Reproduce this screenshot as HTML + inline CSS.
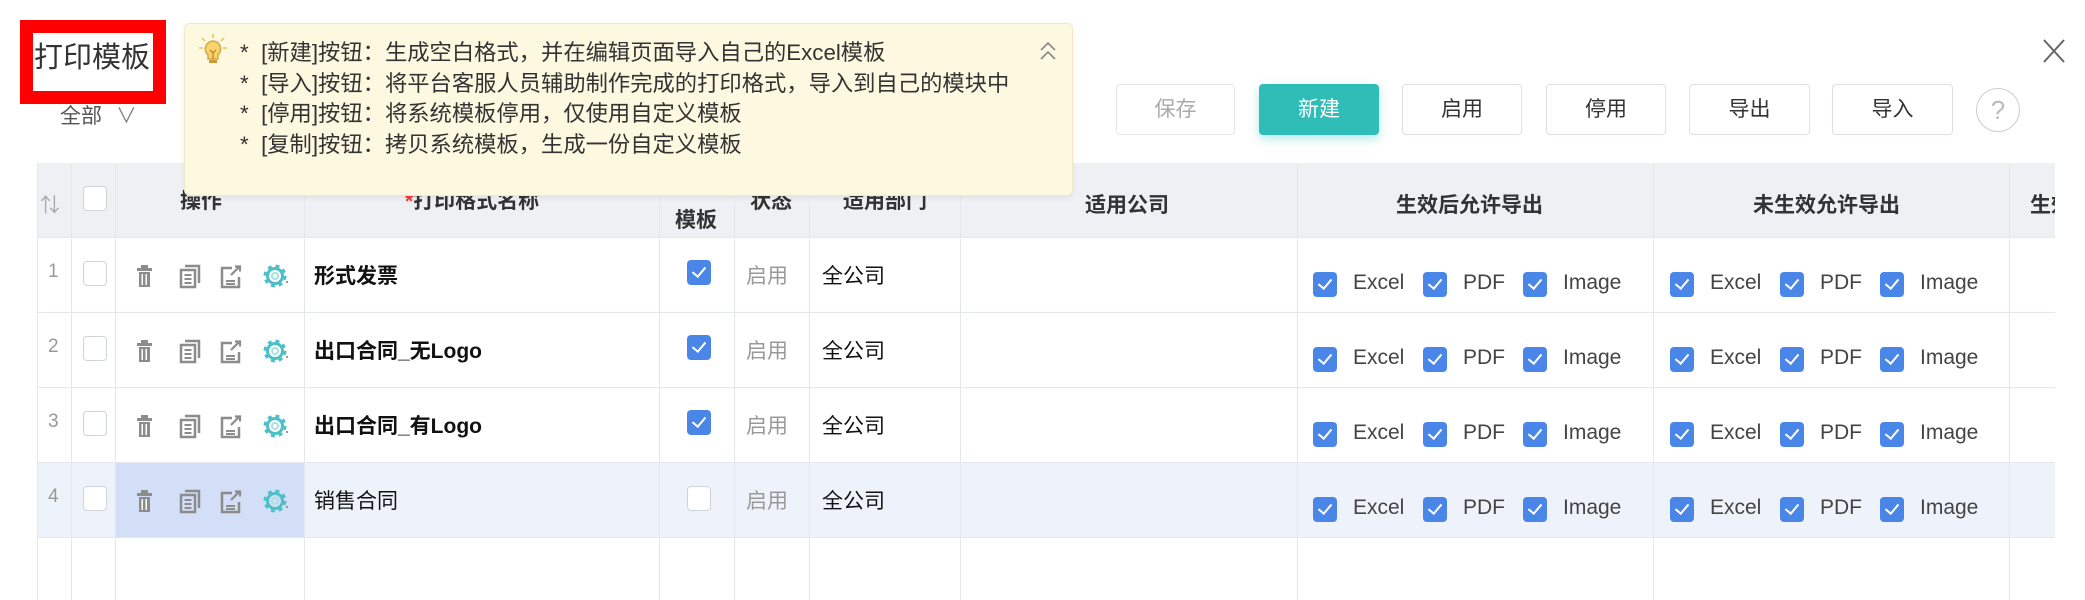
<!DOCTYPE html>
<html><head><meta charset="utf-8"><style>
*{margin:0;padding:0;box-sizing:border-box}
body{width:2085px;height:600px;background:#fff;position:relative;overflow:hidden;font-family:"Liberation Sans","Noto Sans CJK SC",sans-serif;color:#222}
.a{position:absolute;white-space:nowrap}
.btn{position:absolute;top:84px;height:51px;border:1px solid #dcdfe6;border-radius:4px;background:#fff;font-size:21px;color:#333;text-align:center;line-height:49px}
.vl{position:absolute;width:1px;background:#e4e7ed}
.hl{position:absolute;height:1px;background:#e4e7ed;left:37px;width:2018px}
.cb{position:absolute;width:24px;height:25px;border-radius:4px;background:#4a86e8}
.cb::after{content:"";position:absolute;left:8px;top:4px;width:6px;height:11px;border:solid #fff;border-width:0 2.5px 2.5px 0;transform:rotate(40deg)}
.ecb{position:absolute;width:24px;height:25px;border-radius:4px;border:1px solid #cfd3da;background:#fff}
.t{position:absolute;font-size:21px;white-space:nowrap}
</style></head><body>
<div class="a" style="left:20px;top:20px;width:146px;height:84px;border:13px solid #f00"></div>
<div class="a" style="left:34px;top:34px;font-size:29px;color:#333">打印模板</div>
<div class="a" style="left:60px;top:100px;font-size:21px;color:#555">全部 <span style="color:#888;margin-left:8px">∨</span></div>
<svg class="a" style="left:2042px;top:38px" width="24" height="26" viewBox="0 0 24 26"><path d="M2 2L22 24M22 2L2 24" stroke="#666" stroke-width="2" fill="none"/></svg>
<div class="btn" style="left:1116px;width:119px;color:#aaa;border-color:#e6e6e6">保存</div>
<div class="btn" style="left:1259px;width:120px;background:#2fbdb8;border-color:#2fbdb8;color:#fff;box-shadow:0 4px 10px rgba(47,189,184,.35)">新建</div>
<div class="btn" style="left:1402px;width:120px">启用</div>
<div class="btn" style="left:1546px;width:120px">停用</div>
<div class="btn" style="left:1689px;width:121px">导出</div>
<div class="btn" style="left:1832px;width:121px">导入</div>
<div class="a" style="left:1976px;top:88px;width:44px;height:44px;border:1px solid #ccc;border-radius:50%;text-align:center;line-height:42px;font-size:26px;color:#bbb">?</div>
<div class="a" style="left:37px;top:163px;width:2018px;height:74px;background:#eef0f4"></div>
<div class="a" style="left:37px;top:462px;width:2018px;height:75px;background:#eef3fb"></div>
<div class="a" style="left:116px;top:462px;width:189px;height:75px;background:#d3def7"></div>
<div class="vl" style="left:37px;top:163px;height:437px"></div>
<div class="vl" style="left:71px;top:163px;height:437px"></div>
<div class="vl" style="left:115px;top:163px;height:437px"></div>
<div class="vl" style="left:304px;top:163px;height:437px"></div>
<div class="vl" style="left:659px;top:163px;height:437px"></div>
<div class="vl" style="left:734px;top:163px;height:437px"></div>
<div class="vl" style="left:809px;top:163px;height:437px"></div>
<div class="vl" style="left:960px;top:163px;height:437px"></div>
<div class="vl" style="left:1297px;top:163px;height:437px"></div>
<div class="vl" style="left:1653px;top:163px;height:437px"></div>
<div class="vl" style="left:2009px;top:163px;height:437px"></div>
<div class="hl" style="top:237px"></div>
<div class="hl" style="top:312px"></div>
<div class="hl" style="top:387px"></div>
<div class="hl" style="top:462px"></div>
<div class="hl" style="top:537px"></div>
<div class="t" style="left:40px;top:189px;color:#aaa;font-size:20px">⇅</div>
<div class="ecb" style="left:83px;top:186px"></div>
<div class="t" style="left:180px;top:185px;font-weight:bold;color:#333">操作</div>
<div class="t" style="left:405px;top:185px;font-weight:bold;color:#333"><span style="color:#f33">*</span>打印格式名称</div>
<div class="t" style="left:675px;top:204px;font-weight:bold;color:#333">模板</div>
<div class="t" style="left:750px;top:185px;font-weight:bold;color:#333">状态</div>
<div class="t" style="left:843px;top:185px;font-weight:bold;color:#333">适用部门</div>
<div class="t" style="left:1085px;top:189px;font-weight:bold;color:#333">适用公司</div>
<div class="t" style="left:1396px;top:189px;font-weight:bold;color:#333">生效后允许导出</div>
<div class="t" style="left:1753px;top:189px;font-weight:bold;color:#333">未生效允许导出</div>
<div class="t" style="left:2030px;top:189px;font-weight:bold;color:#333">生效</div>
<div class="a" style="left:2055px;top:150px;width:30px;height:450px;background:#fff"></div>
<div id="rows"></div>
<script>
var names=["形式发票","出口合同_无Logo","出口合同_有Logo","销售合同"];
var tops=[237,312,387,462];
var icons='<svg class="a" style="left:136px;top:0" width="160" height="26" viewBox="0 0 160 26">'+
'<g fill="#8c8c8c"><rect x="5" y="2" width="7" height="3"/><rect x="1" y="5" width="15" height="3"/><rect x="3" y="9" width="11" height="15"/></g><g fill="#fff"><rect x="5.5" y="11" width="1.5" height="11"/><rect x="9.5" y="11" width="1.5" height="11"/></g>'+
'<g fill="none" stroke="#8c8c8c" stroke-width="2.5"><rect x="45" y="7" width="14" height="17"/><path d="M49 3h14v17"/><path d="M48.5 12h7M48.5 16h7M48.5 20h7" stroke-width="2"/></g>'+
'<g fill="none" stroke="#8c8c8c" stroke-width="2.5"><path d="M96 5h-10v19h17v-10"/><path d="M90 18h9M90 21h9" stroke-width="2"/><path d="M95 12l8-8M99 3.5h5v5" stroke-width="2.2"/></g>'+
'<g transform="translate(139,13)"><circle r="9" fill="none" stroke="#4bc0c6" stroke-width="5" stroke-dasharray="3.5 3.6"/><circle r="7.5" fill="none" stroke="#4bc0c6" stroke-width="3"/><circle r="3" fill="none" stroke="#a9e0e2" stroke-width="2"/></g><rect x="150" y="18" width="2" height="2" fill="#999"/></svg>';
function grp(x){return '<div class="cb" style="left:'+x+'px;top:35px"></div><div class="t" style="left:'+(x+40)+'px;top:34px;color:#444">Excel</div><div class="cb" style="left:'+(x+110)+'px;top:35px"></div><div class="t" style="left:'+(x+150)+'px;top:34px;color:#444">PDF</div><div class="cb" style="left:'+(x+210)+'px;top:35px"></div><div class="t" style="left:'+(x+250)+'px;top:34px;color:#444">Image</div>';}
var h='';
for(var i=0;i<4;i++){
h+='<div class="a" style="left:0;top:'+tops[i]+'px;width:2055px;height:75px">'+
'<div class="t" style="left:48px;top:24px;color:#999;font-size:19px">'+(i+1)+'</div>'+
'<div class="ecb" style="left:83px;top:24px"></div>'+
'<div class="a" style="left:0;top:26px;width:300px;height:26px">'+icons+'</div>'+
'<div class="t" style="left:314px;top:23px;'+(i<3?'font-weight:bold;':'')+'color:#111">'+names[i]+'</div>'+
(i<3?'<div class="cb" style="left:687px;top:23px"></div>':'<div class="ecb" style="left:687px;top:24px"></div>')+
'<div class="t" style="left:746px;top:23px;color:#999">启用</div>'+
'<div class="t" style="left:822px;top:23px;color:#111">全公司</div>'+
grp(1313)+grp(1670)+'</div>';}
document.getElementById('rows').innerHTML=h;
</script>
<div class="a" style="left:184px;top:23px;width:889px;height:173px;background:#fdf8e0;border:1px solid #f1e8c4;border-radius:6px;box-shadow:0 2px 6px rgba(0,0,0,.06)"></div>
<svg class="a" style="left:198px;top:33px" width="30" height="34" viewBox="0 0 30 34">
<g stroke="#e8c25a" stroke-width="1.5" fill="none"><path d="M15 1v4M4 5l3 3M26 5l-3 3M1 15h4M29 15h-4"/></g>
<path d="M15 8a8 8 0 0 0-5 14v4h10v-4a8 8 0 0 0-5-14z" fill="#f7d36a" stroke="#d4a84a" stroke-width="1.5"/>
<path d="M12 17l3 3 3-3M15 20v6" stroke="#b88a2a" stroke-width="1.3" fill="none"/>
<rect x="11" y="27" width="8" height="3" fill="#c99a3a"/></svg>
<div class="t" style="left:240px;top:38px;color:#333;line-height:30.7px;font-size:22.3px">
<div>*&nbsp; [新建]按钮：生成空白格式，并在编辑页面导入自己的Excel模板</div>
<div>*&nbsp; [导入]按钮：将平台客服人员辅助制作完成的打印格式，导入到自己的模块中</div>
<div>*&nbsp; [停用]按钮：将系统模板停用，仅使用自定义模板</div>
<div>*&nbsp; [复制]按钮：拷贝系统模板，生成一份自定义模板</div>
</div>
<svg class="a" style="left:1038px;top:40px" width="20" height="22" viewBox="0 0 20 22"><path d="M3 10l7-7 7 7M3 19l7-7 7 7" stroke="#888" stroke-width="1.6" fill="none"/></svg>
</body></html>
